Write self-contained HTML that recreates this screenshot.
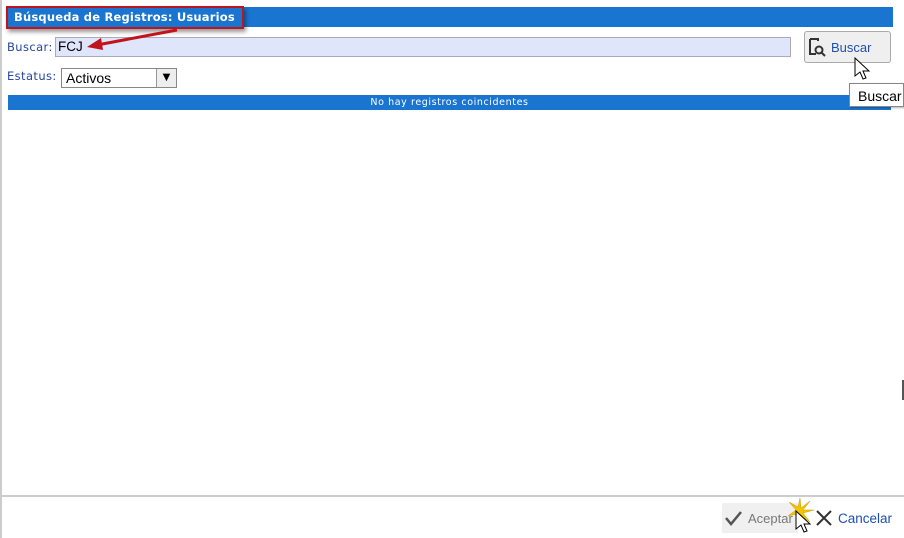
<!DOCTYPE html>
<html><head><style>
body{margin:0;width:904px;height:538px;background:#fff;position:relative;overflow:hidden;font-family:"DejaVu Sans",Verdana,sans-serif}
.a{position:absolute}
</style></head><body>
<div class="a" style="left:0;top:0;width:2px;height:538px;background:#ccc"></div>
<div class="a" style="left:8px;top:7px;width:885px;height:20px;background:#1a75d1"></div>
<div class="a" style="left:6px;top:6px;width:238px;height:23px;border:2px solid #c0141c;box-sizing:border-box;box-shadow:2px 3px 4px rgba(0,0,0,.4)"></div>
<div class="a" style="left:14px;top:10px;color:#fff;font-weight:bold;font-size:11.5px;letter-spacing:.2px">Búsqueda de Registros: Usuarios</div>
<div class="a" style="left:7px;top:40px;color:#2646a0;font-size:11.5px;letter-spacing:.4px">Buscar:</div>
<div class="a" style="left:55px;top:37px;width:736px;height:20px;background:#dfe6fb;border:1px solid #aab;box-sizing:border-box"></div>
<div class="a" style="left:58px;top:39px;font-size:13.5px;font-family:'Liberation Sans',sans-serif">FCJ</div>
<svg class="a" style="left:85px;top:28px" width="95" height="25"><line x1="92" y1="2" x2="12" y2="17" stroke="#c0141c" stroke-width="3"/><polygon points="2,19 16,10 18,22" fill="#c0141c"/></svg>
<div class="a" style="left:7px;top:69px;color:#2646a0;font-size:11.5px;letter-spacing:.4px">Estatus:</div>
<div class="a" style="left:61px;top:68px;width:116px;height:20px;border:1px solid #888;box-sizing:border-box;font-family:'Liberation Sans',sans-serif;font-size:14px;padding:1px 4px">Activos</div>
<div class="a" style="left:156px;top:69px;width:19px;height:18px;background:#eee;border-left:1px solid #999;text-align:center;font-size:10px;line-height:18px">▼</div>
<div class="a" style="left:804px;top:31px;width:87px;height:32px;background:#efefef;border:1px solid #aaa;border-radius:3px;box-sizing:border-box"></div>
<svg class="a" style="left:807px;top:37px" width="20" height="20"><path d="M3 2h8v2M3 2v15h6" stroke="#333" stroke-width="2" fill="none"/><circle cx="12" cy="13" r="3.5" stroke="#333" stroke-width="2" fill="none"/><line x1="14.5" y1="15.5" x2="18" y2="19" stroke="#333" stroke-width="2"/></svg>
<div class="a" style="left:831px;top:40px;color:#1f4fb0;font-size:13px;font-family:'Liberation Sans',sans-serif">Buscar</div>
<div class="a" style="left:8px;top:95px;width:883px;height:15px;background:#1a75d1;color:#fff;font-size:9.5px;text-align:center;line-height:15px;letter-spacing:.6px">No hay registros coincidentes</div>
<div class="a" style="left:849px;top:83px;width:55px;height:24px;background:#fff;border:1px solid #888;box-sizing:border-box;font-family:'Liberation Sans',sans-serif;font-size:14px;padding:4px 0 0 8px;box-shadow:1px 1px 2px rgba(0,0,0,.3)">Buscar</div>
<svg class="a" style="left:854px;top:57px" width="18" height="26"><path d="M1 1v18l5-4 3 7 3-1-3-7h6z" fill="#fff" stroke="#000"/></svg>
<div class="a" style="left:0;top:495px;width:904px;height:2px;background:#ccc"></div>
<div class="a" style="left:722px;top:503px;width:76px;height:30px;background:#f0f0f0"></div>
<svg class="a" style="left:724px;top:509px" width="20" height="18"><path d="M2 9l5 6L17 3" stroke="#555" stroke-width="2.5" fill="none"/></svg>
<div class="a" style="left:748px;top:511px;color:#777;font-size:13px;font-family:'Liberation Sans',sans-serif">Aceptar</div>
<svg class="a" style="left:786px;top:496px" width="30" height="32"><path d="M14 2L15 12 24 5 17 14 28 14 17 17 24 26 14 19 10 28 11 18 2 20 10 14 3 6 12 11z" fill="#f3c400" stroke="#c90" stroke-width=".5"/></svg>
<svg class="a" style="left:795px;top:510px" width="18" height="26"><path d="M1 1v18l5-4 3 7 3-1-3-7h6z" fill="#fff" stroke="#000"/></svg>
<svg class="a" style="left:815px;top:509px" width="18" height="18"><path d="M2 2l14 14M16 2L2 16" stroke="#333" stroke-width="2"/></svg>
<div class="a" style="left:838px;top:511px;color:#1f4fb0;font-size:13.5px;font-family:'Liberation Sans',sans-serif">Cancelar</div>
<div class="a" style="left:902px;top:380px;width:2px;height:20px;background:#555"></div>
</body></html>
